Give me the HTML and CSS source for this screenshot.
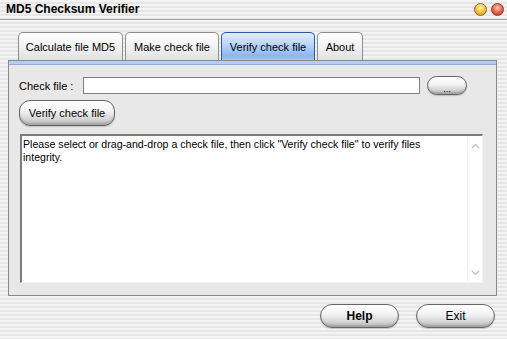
FILE: index.html
```html
<!DOCTYPE html>
<html lang="en">
<head>
<meta charset="UTF-8" />
<title>MD5 Checksum Verifier</title>
<link rel="stylesheet" href="styles.css">
</head>
<body>

<div class="window">
    <!-- TITLE BAR -->
    <div class="titlebar">
        <span class="title">MD5 Checksum Verifier</span>
        <span class="lights">
            <span class="light min"></span>
            <span class="light close"></span>
        </span>
    </div>

    <!-- TABS -->
    <div class="tabs">
        <div class="tab tab-calc">Calculate file MD5</div>
        <div class="tab tab-make">Make check file</div>
        <div class="tab tab-verify active">Verify check file</div>
        <div class="tab tab-about">About</div>
    </div>

    <div class="panel">
        <div class="band"></div>
        <div class="panel-body">
            <div class="file-row">
                <label class="label">Check file :</label>
                <div class="field"></div>
                <button class="pill browse">...</button>
            </div>
            <button class="pill verify">Verify check file</button>
            <div class="log">
                <div class="log-text">Please select or drag-and-drop a check file, then click "Verify check file" to verify files integrity.</div>
                <div class="scroll">
                    <svg width="9" height="6" viewBox="0 0 9 6"><path d="M1 5 L4.5 1.5 L8 5" fill="none" stroke="#c4c4c4" stroke-width="1.5"/></svg>
                    <svg width="9" height="6" viewBox="0 0 9 6"><path d="M1 1 L4.5 4.5 L8 1" fill="none" stroke="#c4c4c4" stroke-width="1.5"/></svg>
                </div>
            </div>
        </div>
    </div>

    <div class="footer">
        <button class="pill big help">Help</button>
        <button class="pill big">Exit</button>
    </div>
</div>

</body>
</html>
```

FILE: styles.css
```css
* { margin: 0; padding: 0; box-sizing: border-box; }
body {
    font-family: 'Liberation Sans', Arial, sans-serif;
    font-size: 11px;
    color: #000;
    background: #fff;
}

.window {
    width: 507px;
    height: 339px;
    overflow: hidden;
    background: repeating-linear-gradient(to bottom, #f4f4f4 0, #f4f4f4 2px, #e6e6e6 2px, #e6e6e6 4px);
}

/* title bar */
.titlebar {
    height: 20px;
    display: flex;
    justify-content: space-between;
    align-items: center;
    padding: 0 3px 1px 6px;
    border-bottom: 1px solid #a4a4a4;
}
.title {
    font-family: 'Liberation Sans', Arial, sans-serif;
    font-weight: bold;
    font-size: 12px;
}
.lights { display: flex; gap: 4px; }
.light {
    width: 13px;
    height: 13px;
    border-radius: 50%;
    border: 1px solid #8a6a40;
}
.light.min { background: radial-gradient(circle at 50% 35%, #fff6c0 0, #f8c840 45%, #d08a10 100%); }
.light.close { background: radial-gradient(circle at 50% 35%, #ffd0c0 0, #f06a50 45%, #b82818 100%); border-color: #8a3a30; }

/* tabs */
.tabs {
    display: flex;
    gap: 2px;
    margin-top: 12px;
    padding-left: 18px;
    height: 28px;
    align-items: flex-end;
}
.tab {
    height: 28px;
    display: flex;
    align-items: center;
    justify-content: center;
    border: 1px solid #8e8e8e;
    border-bottom: none;
    border-radius: 5px 5px 0 0;
    background: linear-gradient(to bottom, #ffffff, #f2f2f2 50%, #e0e0e0);
    font-size: 11px;
    padding-top: 1px;
}
.tab-calc { width: 105px; }
.tab-make { width: 94px; }
.tab-verify { width: 94px; }
.tab-about { width: 46px; }
.tab.active {
    border-color: #2c5aa0;
    background: linear-gradient(to bottom, #e4eefc, #bcd6f8 40%, #8cb6ee 85%, #a0c6f2);
}

/* panel */
.panel {
    width: 489px;
    height: 236px;
    margin-left: 8px;
    border: 1px solid #8a8a8a;
    background: #e8e8e8;
}
.band {
    height: 4px;
    background: #b2cff0;
    border-bottom: 1px solid #8faed6;
}
.panel-body {
    display: flex;
    flex-direction: column;
    padding: 11px 0 0 10px;
}
.file-row {
    display: flex;
    align-items: center;
    height: 19px;
}
.label { width: 64px; font-size: 11px; }
.field {
    width: 337px;
    height: 17px;
    background: #fff;
    border: 1px solid #7f7f7f;
}

/* glossy pill buttons */
.pill {
    font-family: 'Liberation Sans', Arial, sans-serif;
    font-size: 11px;
    color: #000;
    border: 1px solid #666;
    border-radius: 11px;
    background: linear-gradient(to bottom, #ffffff 0, #f4f4f4 40%, #d6d6d6 75%, #b8b8b8 100%);
    box-shadow: inset 0 -2px 2px rgba(0,0,0,0.14), inset 0 1px 1px #fff, 0 1px 1px rgba(0,0,0,0.18);
}
.browse {
    width: 40px;
    height: 19px;
    margin-left: 7px;
    font-size: 9px;
    line-height: 8px;
    padding-top: 6px;
}
.verify {
    width: 96px;
    height: 26px;
    margin-top: 5px;
}

/* log box */
.log {
    display: flex;
    width: 463px;
    height: 149px;
    margin-top: 8px;
    margin-left: 1px;
    background: #fff;
    border-top: 2px solid #7c7c7c;
    border-left: 2px solid #7c7c7c;
    border-right: 1px solid #f4f4f4;
    border-bottom: 1px solid #f4f4f4;
}
.log-text {
    flex: 1;
    padding: 2px 8px 0 1px;
    line-height: 13px;
    font-size: 10.6px;
}
.scroll {
    width: 15px;
    display: flex;
    flex-direction: column;
    justify-content: space-between;
    align-items: center;
    padding: 7px 0 6px;
    border-left: 1px solid #f2f2f2;
}

/* footer */
.footer {
    display: flex;
    justify-content: flex-end;
    gap: 17px;
    padding: 8px 12px 0 0;
}
.big {
    width: 79px;
    height: 24px;
    border-radius: 12px;
    font-size: 12px;
}
.help { font-weight: bold; }
```
